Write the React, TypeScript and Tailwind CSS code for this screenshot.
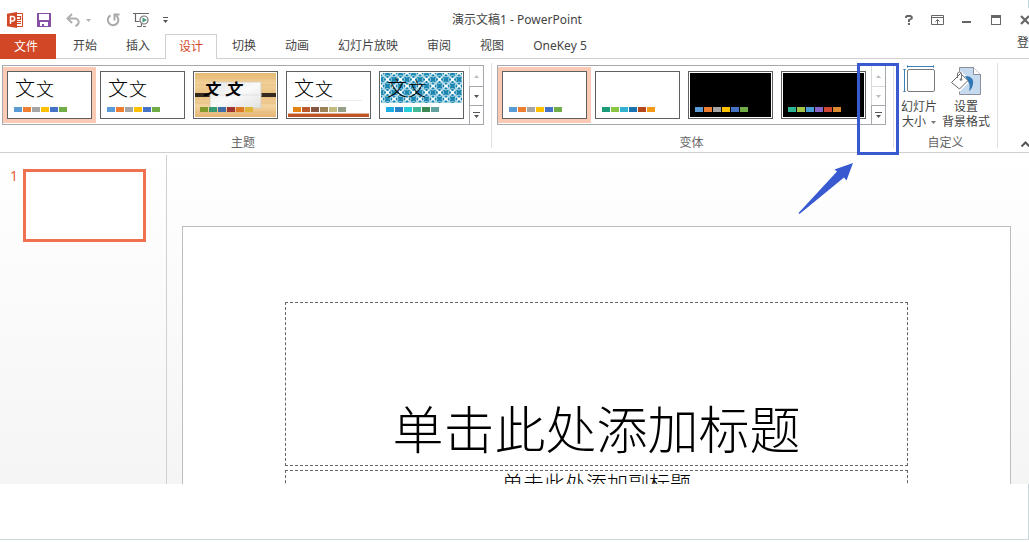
import { useState } from 'react';
import type { ReactNode } from 'react';
import clsx from 'clsx';

type Theme = {
  id: string;
  name: string;
  colors: string[];
  art?: ReactNode;
  dark?: boolean;
  bold?: boolean;
};

const OFFICE = ['#5b9bd5', '#ed7d31', '#a5a5a5', '#ffc000', '#4472c4', '#70ad47'];

const TABS = ['开始', '插入', '设计', '切换', '动画', '幻灯片放映', '审阅', '视图', 'OneKey 5'];

const THEMES: Theme[] = [
  { id: 'current', name: '当前主题', colors: OFFICE },
  { id: 'office', name: 'Office 主题', colors: OFFICE },
  {
    id: 'wood',
    name: '木质',
    colors: ['#829a2b', '#3a9a70', '#416fa5', '#a0342f', '#dd7a26', '#dfb53c'],
    art: <WoodArt />,
    bold: true,
  },
  {
    id: 'retrospect',
    name: '回顾',
    colors: ['#e48312', '#bd582c', '#865640', '#9b8357', '#c2bc80', '#94a088'],
    art: <BandArt />,
  },
  {
    id: 'integral',
    name: '积分',
    colors: ['#1cade4', '#2683c6', '#27ced7', '#42ba97', '#3e8853', '#62a39f'],
    art: <DiamondArt />,
  },
];

const VARIANTS: Theme[] = [
  { id: 'v1', name: '变体 1', colors: OFFICE },
  { id: 'v2', name: '变体 2', colors: ['#1b9b7a', '#8cc543', '#34b0d0', '#1a72ae', '#b7471b', '#f39a19'] },
  { id: 'v3', name: '变体 3', colors: OFFICE, dark: true },
  { id: 'v4', name: '变体 4', colors: ['#2eb593', '#a0c548', '#479dd4', '#8765c9', '#cf4732', '#dc8b30'], dark: true },
];

/* ---- thumbnail artwork ---- */

function WoodArt() {
  return (
    <svg viewBox="0 0 81 44" className="absolute inset-0 size-full" aria-hidden="true">
      <defs>
        <linearGradient id="wood" x1="0" y1="0" x2="0" y2="1">
          <stop offset="0" stopColor="#e5b970" />
          <stop offset="0.25" stopColor="#f2d29b" />
          <stop offset="0.5" stopColor="#e8bd7c" />
          <stop offset="0.75" stopColor="#f3d4a0" />
          <stop offset="1" stopColor="#e6b574" />
        </linearGradient>
        <linearGradient id="paper" x1="0" y1="0" x2="1" y2="1">
          <stop offset="0" stopColor="#e3e3e3" />
          <stop offset="0.5" stopColor="#fafafa" />
          <stop offset="1" stopColor="#e2e2e2" />
        </linearGradient>
      </defs>
      <rect width="81" height="44" fill="url(#wood)" />
      <path d="M0 5h81M0 12h81M0 30h81M0 39h81" stroke="#e3b678" strokeWidth="0.6" />
      <rect y="20" width="81" height="4" fill="#33291f" />
      <rect x="15" y="9" width="51" height="26" fill="url(#paper)" stroke="#d6cbb8" strokeWidth="0.8" />
      <path d="M15 22h52" stroke="#d4d4d4" strokeWidth="0.6" />
    </svg>
  );
}

function BandArt() {
  return (
    <svg viewBox="0 0 81 44" className="absolute inset-0 size-full" aria-hidden="true">
      <path d="M9 27.5h65" stroke="#ececec" />
      <rect y="40" width="81" height="1" fill="#e5b294" />
      <rect y="41" width="81" height="3" fill="#bd5527" />
    </svg>
  );
}

function DiamondArt() {
  return (
    <svg viewBox="0 0 81 44" className="absolute inset-0 size-full" aria-hidden="true">
      <defs>
        <pattern id="diamonds" width="13" height="13" patternUnits="userSpaceOnUse">
          <rect width="13" height="13" fill="#1c86b0" />
          <path d="M0 0l13 13M13 0L0 13" stroke="#e3f3f9" strokeWidth="1.500" />
          <circle cx="6.500" cy="6.500" r="4" fill="none" stroke="#a9d6e6" strokeWidth="1" />
          <path d="M0 4a4 4 0 0 0 4-4M9 0a4 4 0 0 0 4 4M13 9a4 4 0 0 0-4 4M4 13a4 4 0 0 0-4-4" fill="none" stroke="#a9d6e6" />
          <path d="M5 6.500h3M6.500 5v3M0 0h1.500M11.500 0h1.500M0 13h1.500M11.500 13h1.500" stroke="#fff" strokeWidth="2" />
        </pattern>
      </defs>
      <rect width="81" height="30" fill="url(#diamonds)" />
    </svg>
  );
}

/* ---- gallery ---- */

function Thumbnail({ theme, sample, selected, onSelect }: {
  theme: Theme;
  sample?: boolean;
  selected: boolean;
  onSelect: () => void;
}) {
  return (
    <button
      type="button"
      aria-label={theme.name}
      aria-pressed={selected}
      onClick={onSelect}
      className={clsx('h-14 w-[93px] p-1', selected && 'bg-[#fbcab5]')}
    >
      <span className="block size-full border border-[#606060] bg-white p-px">
        <span className={clsx('relative flex size-full flex-col justify-end overflow-hidden pb-[5px]', theme.dark && 'bg-black')}>
          {theme.art}
          {sample && (
            <span
              className={clsx(
                'relative flex grow items-baseline leading-8 text-black',
                theme.bold ? 'gap-[6px] pl-2 text-base font-bold italic' : 'gap-px pl-[6px] text-xl font-light',
              )}
            >
              文<span className={theme.bold ? 'text-base' : 'text-lg'}>文</span>
            </span>
          )}
          <span className="relative flex gap-px pl-[5px]">
            {theme.colors.map((c) => (
              <span key={c} className="h-[5px] w-2" style={{ background: c }} />
            ))}
          </span>
        </span>
      </span>
    </button>
  );
}

function Gallery({ items, sample, canScroll }: { items: Theme[]; sample?: boolean; canScroll?: boolean }) {
  const [selected, setSelected] = useState(items[0].id);
  return (
    <div className="flex h-[60px] gap-px border border-[#a5a8ac] bg-white">
      <div className="flex py-px">
        {items.map((t) => (
          <Thumbnail
            key={t.id}
            theme={t}
            sample={sample}
            selected={selected === t.id}
            onSelect={() => setSelected(t.id)}
          />
        ))}
      </div>
      <div className="flex w-[14px] flex-col">
        <button type="button" aria-label="上一行" className="flex h-5 items-center justify-center border-l border-[#d9d9d9]">
          <svg width="5" height="3" viewBox="0 0 5 3"><path d="M0 3h5L2.500 0z" fill="#bdbdbd" /></svg>
        </button>
        <button
          type="button"
          aria-label="下一行"
          className={clsx(
            'flex h-[19px] items-center justify-center border-t border-l',
            canScroll ? 'border-[#a5a8ac]' : 'border-[#d9d9d9]',
          )}
        >
          <svg width="5" height="3" viewBox="0 0 5 3"><path d="M0 0h5L2.500 3z" fill={canScroll ? '#555' : '#bdbdbd'} /></svg>
        </button>
        <button type="button" aria-label="其他" className="flex grow items-center justify-center border-t border-l border-[#a5a8ac]">
          <svg width="7" height="6" viewBox="0 0 7 6"><path d="M0 0h7v1H0zM1 3h5L3.500 6z" fill="#555" /></svg>
        </button>
      </div>
    </div>
  );
}

function Group({ label, className, children }: { label: string; className?: string; children: ReactNode }) {
  return (
    <section aria-label={label} className={clsx('relative flex shrink-0 flex-col justify-between pt-[6px] pb-px', className)}>
      {children}
      <div className="text-center text-xs text-[#666]">{label}</div>
    </section>
  );
}

function Separator() {
  return <div className="mt-1 mb-1 w-px shrink-0 bg-[#e1e1e1]" />;
}

/* Highlights the scroll column of the variants gallery. */
function Callout() {
  return (
    <>
      <div className="pointer-events-none absolute top-1 -right-[6px] z-10 h-[92px] w-[42px] border-[3px] border-[#3859d0]" />
      <svg width="56" height="53" viewBox="0 0 56 53" className="pointer-events-none absolute top-[103px] right-[39px] z-10" aria-hidden="true">
        <path d="M55 1L36.500 7.500L39 9.500L0.500 51L1.500 52L46 15.500L48.500 18.500Z" fill="#3859d0" />
      </svg>
    </>
  );
}

/* ---- title bar ---- */

function QuickAccess() {
  return (
    <div className="flex flex-1 items-center">
      <button type="button" aria-label="PowerPoint" className="flex w-[29px] justify-center">
        <svg width="16" height="16" viewBox="0 0 16 16">
          <path d="M8 1.500h7.500v13H8z" fill="#fff" stroke="#d24726" />
          <path d="M0 1.800L10 0v16L0 14.200z" fill="#d24726" />
          <path d="M3.500 12V4.500h2a2.200 2.200 0 0 1 0 4.400h-2" fill="none" stroke="#fff" strokeWidth="1.500" />
          <path d="M10 4.500h3.500v3H10M10 9.500h4M10 11.500h4" fill="none" stroke="#d24726" strokeWidth="1.200" />
        </svg>
      </button>
      <button type="button" aria-label="保存" className="flex w-[29px] justify-center">
        <svg width="14" height="14" viewBox="0 0 14 14">
          <path d="M0 0h14v14H0z" fill="#8650a5" />
          <path d="M2 1h10v6H2zM3 9h8v4H7v-2H5v2H3z" fill="#fff" />
        </svg>
      </button>
      <button type="button" aria-label="撤消" className="flex w-10 items-center gap-[6px] pl-2">
        <svg width="14" height="14" viewBox="0 0 14 14" fill="none" stroke="#b0b0b0" strokeWidth="2">
          <path d="M1.500 5.500H9a3.700 3.700 0 0 1 3.700 3.700c0 1.600-1 2.700-3.200 4M6 1L1.500 5.500L6 10" />
        </svg>
        <svg width="5" height="3" viewBox="0 0 5 3"><path d="M0 0h5L2.500 3z" fill="#b0b0b0" /></svg>
      </button>
      <button type="button" aria-label="重复" className="flex w-[29px] justify-center">
        <svg width="14" height="14" viewBox="0 0 14 14" fill="none" stroke="#a9a9a9" strokeWidth="2">
          <path d="M4.500 2.300a5.300 5.300 0 1 0 5.500 0.200M8.500 7.500V1.500H13.500" />
        </svg>
      </button>
      <button type="button" aria-label="从头开始" className="flex w-[29px] justify-center">
        <svg width="17" height="16" viewBox="0 0 17 16" fill="none">
          <path d="M0 1.500h16M2.500 1.500v8h4M8.500 11.500v3M4 14.500h4M10 14.500h3" stroke="#666" strokeWidth="1.200" />
          <circle cx="11" cy="8" r="4" fill="#fff" stroke="#777" strokeWidth="1.200" />
          <path d="M9.500 5.500v5L14 8z" fill="#3f9e78" />
        </svg>
      </button>
      <button type="button" aria-label="自定义快速访问工具栏" className="flex w-[18px] justify-center">
        <svg width="5" height="6" viewBox="0 0 5 6"><path d="M0 0h5v1H0zM0 3h5L2.500 6z" fill="#555" /></svg>
      </button>
    </div>
  );
}

function WindowControls() {
  const cell = 'flex w-[29px] shrink-0 items-center justify-center';
  return (
    <div className="flex flex-1 items-center justify-end">
      <button type="button" aria-label="帮助" className={cell}>
        <svg width="8" height="10" viewBox="0 0 8 10" fill="none" stroke="#666" strokeWidth="2">
          <path d="M1 3V2l1-1h3.500l1.200 1v1.500L4 5v2M4 8v2" />
        </svg>
      </button>
      <button type="button" aria-label="功能区显示选项" className={cell}>
        <svg width="13" height="10" viewBox="0 0 13 10" fill="none" stroke="#666">
          <path d="M0.500 0.500h12v9H0.500zM0.500 2.500h12M6.500 9V4.500M4.500 6.500l2-2l2 2" />
        </svg>
      </button>
      <button type="button" aria-label="最小化" className={cell}>
        <svg width="9" height="10" viewBox="0 0 9 10"><path d="M0 6h9v2H0z" fill="#666" /></svg>
      </button>
      <button type="button" aria-label="最大化" className={cell}>
        <svg width="10" height="10" viewBox="0 0 10 10"><path d="M0 0h10v10H0zM1 3v6h8V3z" fill="#666" fillRule="evenodd" /></svg>
      </button>
      <button type="button" aria-label="关闭" className={clsx(cell, '-mr-[5px]')}>
        <svg width="10" height="10" viewBox="0 0 10 10"><path d="M1 1l8 8M9 1L1 9" stroke="#666" strokeWidth="2.200" /></svg>
      </button>
    </div>
  );
}

/* ---- ribbon buttons ---- */

function SlideSizeIcon() {
  return (
    <svg width="32" height="30" viewBox="0 0 32 30" fill="none" aria-hidden="true">
      <path d="M4 1.500h27M1.500 4v23" stroke="#3f80b8" />
      <path d="M4.500 0v3M30.500 0v3M0 4.500h3M0 26.500h3" stroke="#3f80b8" strokeOpacity="0.7" />
      <rect x="4.500" y="4.500" width="27" height="22" rx="1.500" fill="#fff" stroke="#7a7a7a" />
    </svg>
  );
}

function BackgroundIcon() {
  return (
    <svg width="32" height="30" viewBox="0 0 32 30" fill="none" aria-hidden="true">
      <path d="M9.500 2.500h14l7 7v20h-21z" fill="#c5daef" stroke="#8a9099" />
      <path d="M23.500 2.500v7h7" fill="#fff" stroke="#8a9099" />
      <path d="M1.500 17.500L10.500 8.500L18 15.500L9.500 24z" fill="#fff" stroke="#fff" strokeWidth="4" />
      <path d="M15 11c6 0 9 3 8 8c-0.500 3-2 6-4 7c1-4 1-7-1-9.500z" fill="#2f78b5" />
      <path d="M1.500 17.500L10.500 8.500L18 15.500L9.500 24z" fill="#fff" stroke="#666" />
      <path d="M7.500 13V9a2 2 0 0 1 4 0v5" stroke="#777" />
      <circle cx="11" cy="14.500" r="1.300" fill="#777" />
    </svg>
  );
}

export default function App() {
  const [tab, setTab] = useState('设计');

  return (
    <div className="relative overflow-hidden bg-white font-['Noto_Sans','Noto_Sans_CJK_SC',sans-serif] text-xs text-[#444]">
      <span className="absolute top-0 right-0 h-2 w-px bg-[#bcd5dc]" />

      <header className="-mr-[5px] flex h-[34px] pt-[6px]">
        <QuickAccess />
        <h1 className="self-center whitespace-nowrap">演示文稿1 - PowerPoint</h1>
        <WindowControls />
      </header>

      <nav className="flex h-[25px] gap-px border-b border-[#d0d0d0]">
        <button type="button" className="-mb-px mr-[2px] w-14 bg-[#d24726] pl-[14px] text-left text-white">
          文件
        </button>
        {TABS.map((t) => (
          <button
            key={t}
            type="button"
            onClick={() => setTab(t)}
            className={clsx(
              'shrink-0 whitespace-nowrap',
              tab === t
                ? '-mb-px border border-b-0 border-[#d0d0d0] bg-white px-[13px] text-[#d24726]'
                : 'px-[14px]',
            )}
          >
            {t}
          </button>
        ))}
        <a href="#login" className="ml-auto self-start leading-[18px]">登</a>
      </nav>

      <div className="flex h-[94px] border-b border-[#d0d0d0]">
        <Group label="主题" className="pr-[7px] pl-[2px]">
          <Gallery items={THEMES} sample canScroll />
        </Group>
        <Separator />
        <Group label="变体" className="pr-[7px] pl-[5px]">
          <Gallery items={VARIANTS} />
          <Callout />
        </Group>
        <Separator />
        <Group label="自定义" className="w-[103px]">
          <div className="flex gap-[5px] pl-[7px] leading-[15px]">
            <button type="button" className="flex flex-col items-center gap-1">
              <SlideSizeIcon />
              <span>
                幻灯片
                <br />
                大小
                <svg width="5" height="3" viewBox="0 0 5 3" className="ml-[5px] inline align-middle">
                  <path d="M0 0h5L2.500 3z" fill="#777" />
                </svg>
              </span>
            </button>
            <button type="button" className="flex flex-col items-center gap-1">
              <BackgroundIcon />
              <span>
                设置
                <br />
                背景格式
              </span>
            </button>
          </div>
        </Group>
        <Separator />
        <button type="button" aria-label="折叠功能区" className="ml-auto self-end pb-[5px]">
          <svg width="8" height="6" viewBox="0 0 8 6" fill="none"><path d="M0.500 5.500L4.500 1.500L8.500 5.500" stroke="#555" strokeWidth="2" /></svg>
        </button>
      </div>

      <main className="flex h-[331px] overflow-hidden bg-linear-to-b from-white to-[#f5f5f5]">
        <aside className="mt-[2px] w-[167px] shrink-0 border-r border-[#d0d0d0] pt-[14px]">
          <button type="button" aria-label="幻灯片 1" className="flex gap-[5px] pl-[10px]">
            <span className="w-2 text-sm leading-[14px] text-[#e2603f]">1</span>
            <span className="h-[73px] w-[123px] border-[3px] border-[#f07150] bg-white" />
          </button>
        </aside>
        <div className="grow pt-[73px] pr-[18px] pl-[15px]">
          <div className="border border-[#bdbdbd] bg-white px-[102px] pt-[75px] font-['Liberation_Serif','Noto_Sans_CJK_SC',serif] text-black">
            <div className="flex h-[164px] items-end justify-center border border-dashed border-[#666]">
              <h2 className="text-[51px] leading-[66px] font-light whitespace-nowrap">单击此处添加标题</h2>
            </div>
            <div className="mt-1 h-[120px] border border-dashed border-[#666] text-center text-[21px] leading-[26px] font-light">
              单击此处添加副标题
            </div>
          </div>
        </div>
      </main>

      <footer className="h-14 border-r border-b border-[#cbd8da] bg-white" />
    </div>
  );
}
